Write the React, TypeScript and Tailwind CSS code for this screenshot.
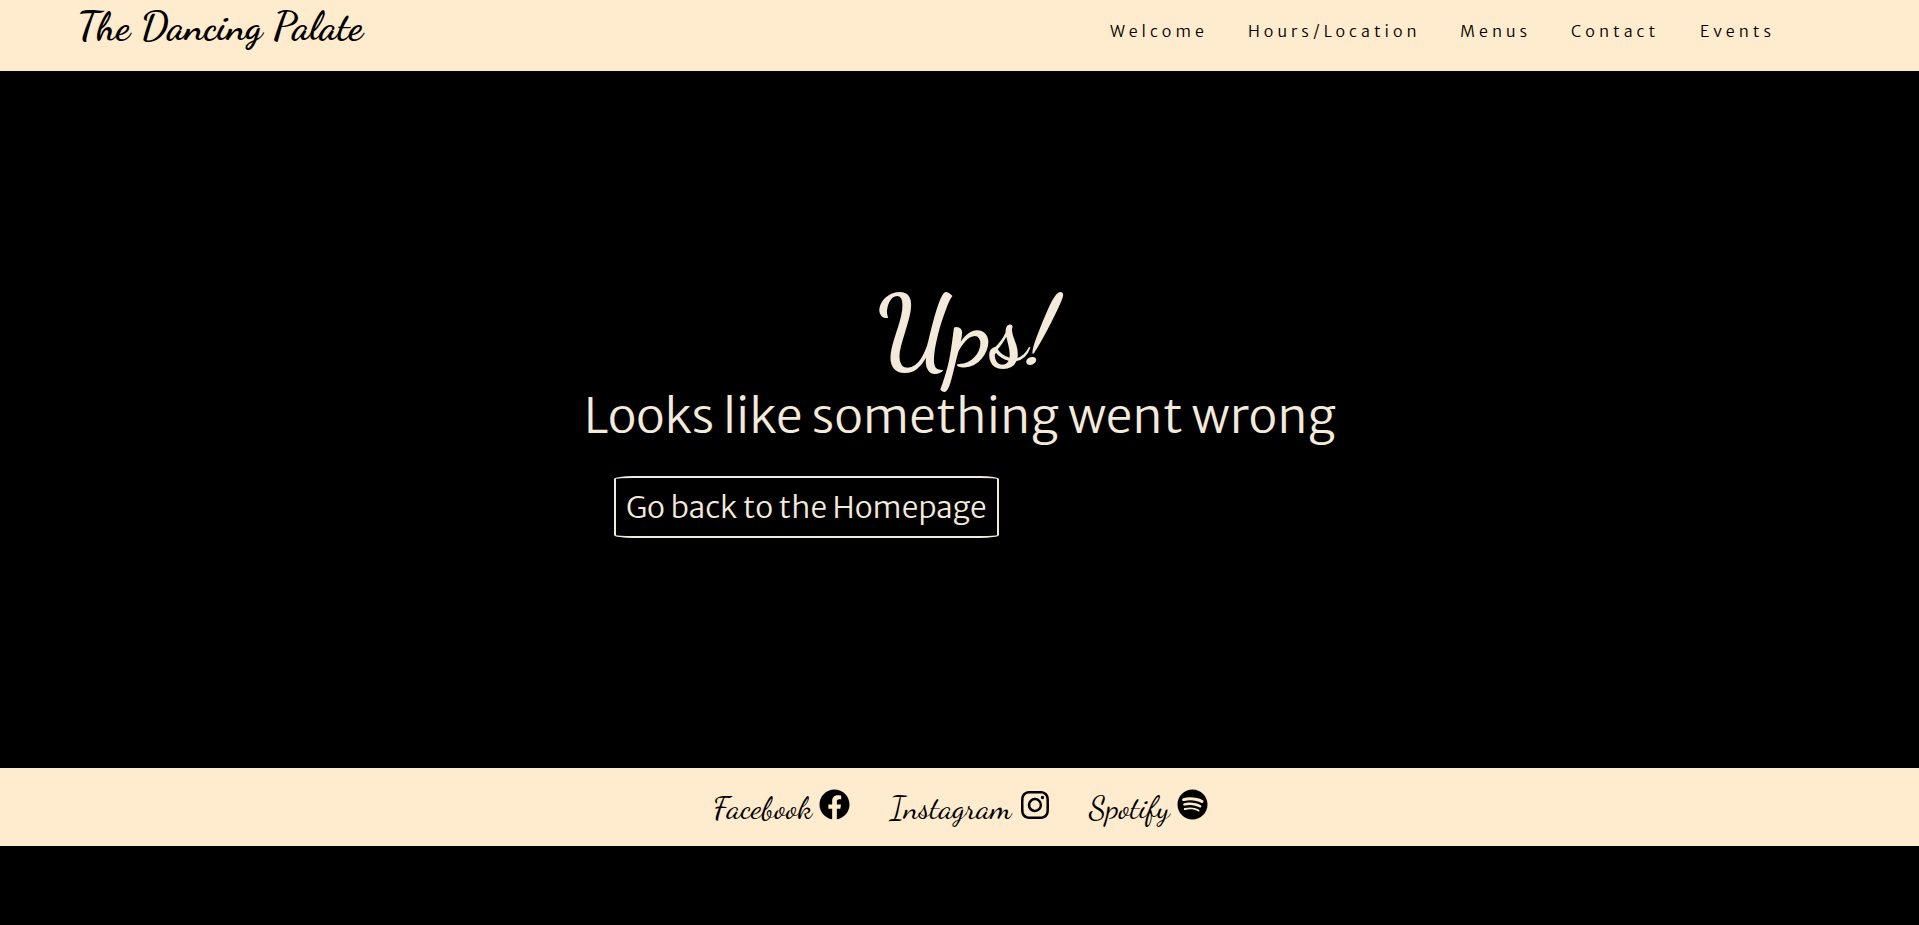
import { FaFacebook, FaSpotify } from "react-icons/fa";
import { BsInstagram } from "react-icons/bs";

const script = "font-['Dancing_Script','Liberation_Serif',cursive] whitespace-nowrap";
const sans = "font-['Merriweather_Sans','Open_Sans',sans-serif] font-light whitespace-nowrap";

const navItems = [
  { label: "Welcome", width: "w-[138px]" },
  { label: "Hours/Location", width: "w-[212px]" },
  { label: "Menus", width: "w-[111px]" },
  { label: "Contact", width: "w-[129px]" },
  { label: "Events", width: "w-[73px]" },
];

function Header() {
  return (
    <header className="flex h-[71px] justify-between bg-[#ffebcd] pl-[77px] pr-[146px] text-black">
      <h1 className={`${script} text-[40px] font-bold leading-[52px]`}>The Dancing Palate</h1>
      <nav className="flex pt-[19px]">
        {navItems.map((item) => (
          <a key={item.label} href="#" className={`${sans} ${item.width} text-[16px] leading-6 tracking-[4px]`}>
            {item.label}
          </a>
        ))}
      </nav>
    </header>
  );
}

function Message() {
  return (
    <main className="flex h-[697px] flex-col pt-[206px] text-[#f4eadb]">
      <h2 className={`${script} ml-[876px] h-[105px] w-[170px] text-[100px] font-bold leading-[110px]`}>Ups!</h2>
      <p className={`${sans} ml-[584px] h-[94px] text-[48px] leading-[68px]`}>Looks like something went wrong</p>
      <a
        href="#"
        className={`${sans} ml-[614px] h-[62px] w-[385px] rounded-[5%] border-2 border-[#f4eadb] pl-[10px] text-[30px] leading-[58px]`}
      >
        Go back to the Homepage
      </a>
    </main>
  );
}

function Footer() {
  return (
    <footer className="flex h-[78px] bg-[#ffebcd] pl-[713px] text-black">
      <a href="#" className="flex w-[177px] pt-[21px]">
        <span className={`${script} w-[106px] text-[32px] leading-[38px]`}>Facebook</span>
        <FaFacebook className="size-[31px]" />
      </a>
      <a href="#" className="flex w-[199px] pt-[21px]">
        <span className={`${script} w-[131px] text-[32px] leading-[38px]`}>Instagram</span>
        <BsInstagram className="mt-[2px] size-[28px]" />
      </a>
      <a href="#" className="flex pt-[21px]">
        <span className={`${script} w-[88px] text-[32px] leading-[38px]`}>Spotify</span>
        <FaSpotify className="size-[31px]" />
      </a>
    </footer>
  );
}

export default function App() {
  return (
    <div className="h-[925px] w-full overflow-hidden bg-black">
      <Header />
      <Message />
      <Footer />
    </div>
  );
}
